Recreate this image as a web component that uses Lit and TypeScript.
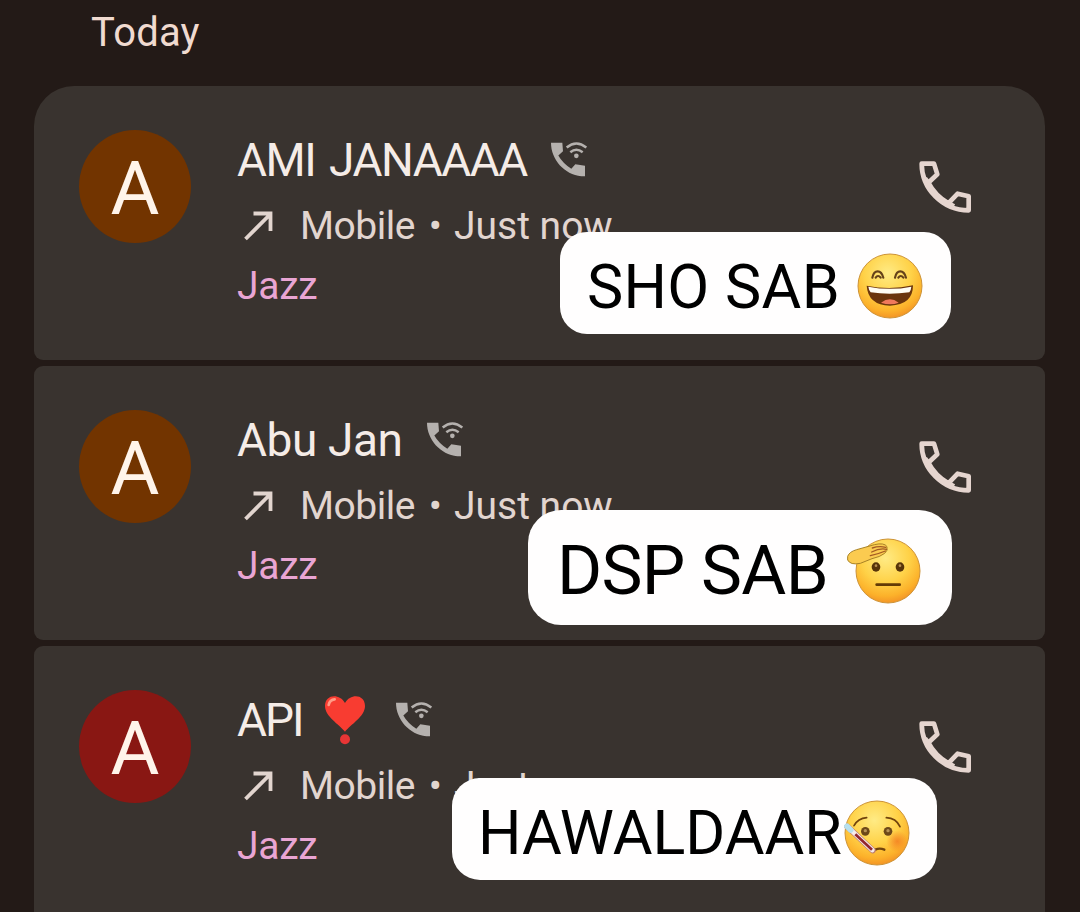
import { LitElement, html, svg, css, type TemplateResult } from "lit";
import { customElement, property } from "lit/decorators.js";

type Tone = "brown" | "red";
type Mood = "grin" | "salute" | "sick";

interface Call {
  name: string;
  heart?: boolean;
  tone: Tone;
  label: string;
  mood: Mood;
  variant: string;
}

const CALLS: Call[] = [
  { name: "AMI JANAAAA", tone: "brown", label: "SHO SAB", mood: "grin", variant: "first" },
  { name: "Abu Jan", tone: "brown", label: "DSP SAB", mood: "salute", variant: "second" },
  { name: "API", heart: true, tone: "red", label: "HAWALDAAR", mood: "sick", variant: "third" },
];

const FACES: Record<Mood, TemplateResult> = {
  grin: svg`
    <g fill="none" stroke="#65421a" stroke-width="6.5" stroke-linecap="round">
      <path d="M46 74q4-19 16-19t17 19M56 74q7-10 15 0" />
      <path d="M114 74q4-19 16-19t17 19M124 74q7-10 15 0" />
    </g>
    <path d="M29 98q70 14 139-1q0 59-69 61q-66-2-70-60z" fill="#6b350c" />
    <path d="M34 101q66 13 129 0q-1 12-6 17q-60 8-116 0q-5-5-7-17z" fill="#fffdf4" />
    <path d="M72 149q27-20 53 0q-25 10-53 0z" fill="#f0795c" />
  `,
  salute: svg`
    <g fill="#573409">
      <ellipse cx="63" cy="87" rx="13" ry="14" />
      <ellipse cx="135" cy="87" rx="13" ry="14" />
    </g>
    <g fill="#b78d50">
      <circle cx="63" cy="83" r="4" />
      <circle cx="135" cy="83" r="4" />
    </g>
    <path d="M65 140h69" stroke="#633a06" stroke-width="8" stroke-linecap="round" />
    <path
      d="M-22 55Q-17 41 5 35L58 20Q88 13 96 26Q99 38 89 46Q75 57 51 62L16 76Q-14 82-22 66z"
      fill="#fbcb50"
      stroke="#a98225"
      stroke-width="3"
    />
    <path
      d="M52 30Q72 23 92 28M50 42Q75 29 95 34M46 53Q70 48 91 39"
      fill="none"
      stroke="#a35b23"
      stroke-width="4"
      stroke-linecap="round"
    />
  `,
  sick: svg`
    <defs>
      <radialGradient id="cheek">
        <stop offset="0" stop-color="#f47f22" stop-opacity=".85" />
        <stop offset="1" stop-color="#f47f22" stop-opacity="0" />
      </radialGradient>
    </defs>
    <circle cx="160" cy="124" r="33" fill="url(#cheek)" />
    <g fill="none" stroke="#70430d" stroke-width="5" stroke-linecap="round">
      <path d="M30 77Q42 55 68 53M127 53q29 1 41 27" />
      <path d="M94 149q13-6 27 0" stroke-width="7" />
    </g>
    <g fill="#6d4819">
      <circle cx="64" cy="94" r="13" />
      <circle cx="132" cy="94" r="13" />
    </g>
    <g fill="#b79357">
      <circle cx="64" cy="92" r="5" />
      <circle cx="132" cy="92" r="5" />
    </g>
    <path d="M10 80L86 151" stroke="#bc7c70" stroke-width="18" stroke-linecap="round" />
    <path d="M10 80L85 150" stroke="#f6eceb" stroke-width="14" stroke-linecap="round" />
    <path d="M34 103L84 149" stroke="#93272e" stroke-width="8" />
    <path d="M9 79L20 90" stroke="#b7e0ed" stroke-width="17" stroke-linecap="round" />
  `,
};

@customElement("mood-face")
export class MoodFace extends LitElement {
  static override styles = css`
    :host {
      display: block;
      width: 66px;
      height: 66px;
    }

    svg {
      display: block;
      width: 100%;
      height: 100%;
      overflow: visible;
    }
  `;

  @property() mood: Mood = "grin";

  override render() {
    return html`
      <svg viewBox="0 0 198 198" aria-hidden="true">
        <defs>
          <radialGradient id="skin" cx="46%" cy="30%" r="74%">
            <stop offset="0" stop-color="#ffeb85" />
            <stop offset=".5" stop-color="#ffd248" />
            <stop offset=".8" stop-color="#fcb12a" />
            <stop offset="1" stop-color="#f08a24" />
          </radialGradient>
        </defs>
        <circle cx="99" cy="99" r="96" fill="url(#skin)" stroke="#cd9337" stroke-width="3" />
        ${FACES[this.mood]}
      </svg>
    `;
  }
}

@customElement("call-card")
export class CallCard extends LitElement {
  static override styles = css`
    :host {
      display: block;
    }

    .card {
      position: relative;
      display: flex;
      box-sizing: border-box;
      height: 274px;
      padding: 44px 74px 0 45px;
      border-radius: 9px;
      background: #39332f;
    }

    .card.first {
      border-radius: 40px 40px 9px 9px;
    }

    .avatar {
      display: flex;
      align-items: center;
      justify-content: center;
      flex-shrink: 0;
      box-sizing: border-box;
      width: 112px;
      height: 113px;
      padding-top: 3px;
      border-radius: 50%;
      font-size: 75px;
      line-height: 110px;
      color: #fff4ea;
    }

    .avatar.brown {
      background: #723400;
    }

    .avatar.red {
      background: #891713;
    }

    .details {
      flex: 1;
      margin-left: 46px;
      white-space: nowrap;
    }

    .title,
    .meta {
      display: flex;
      align-items: center;
      height: 60px;
    }

    .title {
      margin-bottom: 6px;
      font-size: 46px;
      color: #f5ece7;
    }

    .name.first {
      letter-spacing: -1.5px;
      word-spacing: 4px;
    }

    .name.second {
      letter-spacing: -0.4px;
    }

    .name.third {
      letter-spacing: -2px;
    }

    .title .wifi {
      margin: -1px 0 0 24px;
    }

    .meta {
      font-size: 39px;
      color: #e2d5cf;
    }

    .kind {
      letter-spacing: -0.5px;
    }

    .when {
      margin-left: 12px;
    }

    .dot {
      margin-left: 14px;
    }

    .arrow {
      margin: 0 27px 0 7px;
    }

    .carrier {
      font-size: 39px;
      line-height: 60px;
      letter-spacing: -0.3px;
      color: #e9a5d4;
    }

    .title .heart {
      margin-left: 21px;
    }

    .title .heart + .wifi {
      margin-left: 30px;
    }

    .dial {
      margin-top: 31px;
    }

    svg {
      display: block;
      flex-shrink: 0;
    }

    .bubble {
      position: absolute;
      display: flex;
      align-items: center;
      box-sizing: border-box;
      background: #fffefe;
      color: #000;
      font-size: 61px;
      white-space: nowrap;
    }

    .bubble mood-face {
      position: absolute;
    }

    .bubble.first {
      top: 146px;
      right: 94px;
      width: 391px;
      height: 102px;
      padding: 8px 0 0 27px;
      border-radius: 27px;
      letter-spacing: 0.3px;
    }

    .bubble.first mood-face {
      top: 21px;
      right: 28px;
    }

    .bubble.second {
      top: 144px;
      right: 93px;
      width: 424px;
      height: 115px;
      padding: 6px 0 0 29px;
      border-radius: 33px;
      font-size: 69px;
      letter-spacing: -0.7px;
    }

    .bubble.second mood-face {
      top: 28px;
      right: 31px;
    }

    .bubble.third {
      top: 132px;
      right: 108px;
      width: 485px;
      height: 102px;
      padding: 8px 0 0 26px;
      border-radius: 28px;
    }

    .bubble.third mood-face {
      top: 22px;
      right: 27px;
    }
  `;

  @property({ attribute: false }) call!: Call;

  private _renderHeart() {
    return html`
      <svg class="heart" width="42" height="50" viewBox="0 0 126 150">
        <path d="M63 110C46 88 3 65 3 33C3-2 46-6 63 24C80-6 123-2 123 33C123 65 80 88 63 110z" fill="#f83c31" />
        <path d="M14 30q3-16 18-17" stroke="#ff9b86" stroke-width="8" stroke-linecap="round" fill="none" />
        <circle cx="63" cy="133" r="15" fill="#e83535" />
      </svg>
    `;
  }

  private _renderWifiCall() {
    return html`
      <svg class="wifi" width="36" height="35" viewBox="0 0 108 104">
        <path
          d="M0 2H34L36 27L22 40Q35 63 61 80L73 66L102 71V102H91C40 98 0 52 0 2z"
          fill="#b5b1ae"
        />
        <g fill="none" stroke="#b5b1ae" stroke-width="7.5">
          <path d="M47 16Q76-8 106 16" />
          <path d="M58 30Q76 15 95 30" />
        </g>
        <circle cx="76" cy="41" r="7" fill="#b5b1ae" />
      </svg>
    `;
  }

  override render() {
    const { name, heart, tone, label, mood, variant } = this.call;

    return html`
      <div class="card ${variant}">
        <div class="avatar ${tone}">A</div>
        <div class="details">
          <div class="title">
            <span class="name ${variant}">${name}</span>
            ${heart ? this._renderHeart() : null} ${this._renderWifiCall()}
          </div>
          <div class="meta">
            <svg class="arrow" width="29" height="30" viewBox="0 0 29 30">
              <path d="M1.5 28L26 3.5M9.5 2.5H26.5V20" fill="none" stroke="#e2d5cf" stroke-width="3.8" />
            </svg>
            <span class="kind">Mobile</span>
            <span class="dot">•</span>
            <span class="when">Just now</span>
          </div>
          <div class="carrier">Jazz</div>
        </div>
        <svg class="dial" width="52" height="52" viewBox="0 0 156 156">
          <path
            d="M8 8H45L55 40L28 65Q48 104 88 127L116 98L149 106V148C70 148 8 83 8 8zM28 65L18 52M88 127L105 136"
            fill="none"
            stroke="#e5d5cf"
            stroke-width="14"
            stroke-linejoin="round"
          />
        </svg>
        <div class="bubble ${variant}">
          <span>${label}</span>
          <mood-face .mood=${mood}></mood-face>
        </div>
      </div>
    `;
  }
}

@customElement("app-root")
export class AppRoot extends LitElement {
  static override styles = css`
    :host {
      display: block;
      box-sizing: border-box;
      width: 1080px;
      height: 912px;
      overflow: hidden;
      background: #231a17;
      font-family: Roboto, sans-serif;
    }

    .day {
      height: 86px;
      padding-left: 91px;
      font-size: 40px;
      line-height: 66px;
      letter-spacing: 0.2px;
      color: #f0dad0;
      box-sizing: border-box;
    }

    .list {
      display: flex;
      flex-direction: column;
      gap: 6px;
      width: 1011px;
      margin-left: 34px;
    }
  `;

  override render() {
    return html`
      <div class="day">Today</div>
      <div class="list">${CALLS.map((call) => html`<call-card .call=${call}></call-card>`)}</div>
    `;
  }
}

declare global {
  interface HTMLElementTagNameMap {
    "app-root": AppRoot;
    "call-card": CallCard;
    "mood-face": MoodFace;
  }
}
